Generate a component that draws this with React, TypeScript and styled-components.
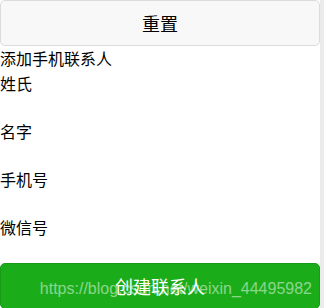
import styled, { createGlobalStyle } from "styled-components";

const GlobalStyle = createGlobalStyle`
  html, body {
    margin: 0;
    padding: 0;
    background: #ebebeb;
  }
  body {
    font-family: "Microsoft YaHei", "Noto Sans CJK SC", "Liberation Sans", sans-serif;
    color: #000;
  }
`;

const Page = styled.div`
  width: 320px;
  min-height: 308px;
  background: #fff;
  overflow: hidden;
`;

const Button = styled.button<{ primary?: boolean }>`
  position: relative;
  display: block;
  width: 100%;
  height: 46px;
  margin: 0;
  padding: 0;
  border: 1px solid ${(p) => (p.primary ? "#179b16" : "#dcdcdc")};
  border-radius: 5px;
  background: ${(p) => (p.primary ? "#1aad19" : "#f8f8f8")};
  color: ${(p) => (p.primary ? "#fff" : "#000")};
  font-family: "Noto Sans CJK SC", sans-serif;
  font-size: 18px;
  line-height: 44px;
  overflow: hidden;
`;

const Title = styled.div`
  font-size: 16px;
  line-height: 25px;
  height: 25px;
`;

const Field = styled.div`
  display: flex;
  flex-direction: column;
`;

const Label = styled.label`
  font-size: 16px;
  line-height: 24px;
  height: 24px;
`;

const Input = styled.input`
  height: 24px;
  border: none;
  outline: none;
  padding: 0;
  margin: 0;
  background: transparent;
  font-size: 15px;
`;

const Watermark = styled.span`
  position: absolute;
  right: 7px;
  bottom: 10px;
  font-family: "Liberation Sans", Arial, sans-serif;
  font-size: 16px;
  line-height: 18px;
  color: rgba(255, 255, 255, 0.5);
  white-space: nowrap;
  pointer-events: none;
`;

const fields = ["姓氏", "名字", "手机号", "微信号"];

export default function App() {
  return (
    <>
      <GlobalStyle />
      <Page>
        <Button>重置</Button>
        <Title>添加手机联系人</Title>
        {fields.map((f) => (
          <Field key={f}>
            <Label>{f}</Label>
            <Input />
          </Field>
        ))}
        <Button primary>
          创建联系人
          <Watermark>https://blog.csdn.net/weixin_44495982</Watermark>
        </Button>
      </Page>
    </>
  );
}
